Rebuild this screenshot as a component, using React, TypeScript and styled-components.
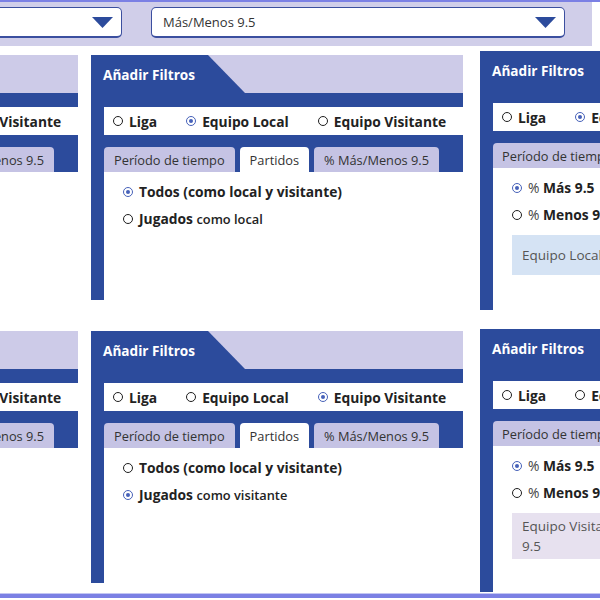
import React from 'react';
import styled, { createGlobalStyle } from 'styled-components';

const BLUE = '#2c4b9c';
const HEAD_LAV = '#cdcbe8';
const TAB_LAV = '#c5c3e4';

const GlobalStyle = createGlobalStyle`
  html, body { margin: 0; padding: 0; background: #fff; }
  body { font-family: 'Open Sans', 'Liberation Sans', sans-serif; color: #222; }
`;

const Frame = styled.div`
  width: 600px;
  height: 600px;
  box-sizing: border-box;
  overflow: hidden;
  border-top: 2px solid #7b80e4;
  display: flex;
  flex-direction: column;
`;

const TopBar = styled.header`
  width: 592px;
  height: 44px;
  flex-shrink: 0;
  box-sizing: border-box;
  padding-top: 5px;
  background: #d0cee9;
  display: flex;
  align-items: flex-start;
  gap: 29px;
`;

const Select = styled.div<{ $w: number; $pull?: number }>`
  width: ${p => p.$w}px;
  margin-left: ${p => p.$pull ?? 0}px;
  height: 31px;
  flex-shrink: 0;
  box-sizing: border-box;
  background: #fff;
  border: 1.5px solid #3b4f9f;
  border-bottom-width: 2.5px;
  border-radius: 5px;
  padding: 0 8px 0 11px;
  display: flex;
  align-items: center;
  justify-content: space-between;
  font-size: 13px;
  color: #333;
`;

const Canvas = styled.main`
  flex: 1;
  min-height: 0;
  display: flex;
  margin-left: -294px;
`;

const Column = styled.div<{ $top: number; $gap: number; $ml: number }>`
  flex-shrink: 0;
  display: flex;
  flex-direction: column;
  padding-top: ${p => p.$top}px;
  gap: ${p => p.$gap}px;
  margin-left: ${p => p.$ml}px;
`;

const Panel = styled.section<{ $h: number }>`
  width: 372px;
  height: ${p => p.$h}px;
  display: flex;
  flex-direction: column;
`;

const PanelHeader = styled.div`
  height: 38px;
  flex-shrink: 0;
  background: ${HEAD_LAV};
  display: flex;
`;

const HeaderTab = styled.div<{ $w: number }>`
  width: ${p => p.$w}px;
  box-sizing: border-box;
  padding-left: 12px;
  background: ${BLUE};
  clip-path: polygon(0 0, calc(100% - 37px) 0, 100% 100%, 0 100%);
  display: flex;
  align-items: center;
  color: #fff;
  font-size: 13.6px;
  font-weight: 700;
`;

const PanelBody = styled.div`
  flex: 1;
  background: ${BLUE};
  padding: 14px 0 0 13px;
  display: flex;
  flex-direction: column;
`;

const RadioBar = styled.div`
  height: 28px;
  flex-shrink: 0;
  background: #fff;
  padding-left: 9px;
  display: flex;
  align-items: center;
  gap: 29px;
  font-size: 14.4px;
  font-weight: 700;
  white-space: nowrap;
`;

const TabRow = styled.div`
  margin-top: 12px;
  height: 25px;
  flex-shrink: 0;
  display: flex;
  gap: 5px;
`;

const Tab = styled.div<{ $active?: boolean; $pad?: number }>`
  padding: 0 ${p => p.$pad ?? 10}px;
  border-radius: 4px 4px 0 0;
  background: ${p => (p.$active ? '#fff' : TAB_LAV)};
  display: flex;
  align-items: center;
  font-size: 12.8px;
  font-weight: 500;
  color: #333;
  white-space: nowrap;
`;

const Content = styled.div`
  flex: 1;
  background: #fff;
  padding: 11px 0 0 19px;
  display: flex;
  flex-direction: column;
  gap: 10px;
`;

const Option = styled.label`
  height: 17px;
  display: flex;
  align-items: center;
  gap: 6px;
  font-size: 13.8px;
  white-space: nowrap;
`;

const Dot = styled.span<{ $on?: boolean }>`
  width: 10px;
  height: 10px;
  flex-shrink: 0;
  box-sizing: border-box;
  border-radius: 50%;
  border: 1.7px solid ${p => (p.$on ? '#4661b9' : '#1e1e1e')};
  display: flex;
  align-items: center;
  justify-content: center;
  &::after {
    content: '';
    width: 4px;
    height: 4px;
    border-radius: 50%;
    background: ${p => (p.$on ? '#4661b9' : 'transparent')};
  }
`;

const Bold = styled.span`
  font-weight: 700;
`;

const Soft = styled.span`
  font-weight: 600;
  font-size: 12.8px;
`;

const Plain = styled.span`
  font-weight: 400;
  color: #444;
`;

const Note = styled.div<{ $tone: 'blue' | 'lilac' }>`
  width: 320px;
  margin-top: 2px;
  min-height: 40px;
  box-sizing: border-box;
  padding: 3px 10px;
  display: flex;
  align-items: center;
  background: ${p => (p.$tone === 'blue' ? '#d5e3f4' : '#e7e1ef')};
  color: #555;
  font-size: 13.5px;
  line-height: 20px;
  white-space: nowrap;
`;

const BottomRule = styled.div`
  height: 5px;
  flex-shrink: 0;
  margin-bottom: 2px;
  box-sizing: border-box;
  border-top: 1px solid #c3c6f2;
  background: #7b80e4;
`;

const Caret = () => (
  <svg width="21" height="11" viewBox="0 0 21 11">
    <polygon points="0,0 21,0 10.5,11" fill="#2c4b9c" />
  </svg>
);

type Team = 'liga' | 'local' | 'visit';
type TabKey = 'periodo' | 'partidos' | 'pct';

const RadioGroup = ({ team }: { team: Team }) => (
  <RadioBar>
    <Option as="span"><Dot $on={team === 'liga'} /><span>Liga</span></Option>
    <Option as="span"><Dot $on={team === 'local'} /><span>Equipo Local</span></Option>
    <Option as="span"><Dot $on={team === 'visit'} /><span>Equipo Visitante</span></Option>
  </RadioBar>
);

const Tabs = ({ active, pad }: { active: TabKey; pad?: number }) => (
  <TabRow>
    <Tab $active={active === 'periodo'} $pad={pad}>Período de tiempo</Tab>
    <Tab $active={active === 'partidos'} $pad={pad}>Partidos</Tab>
    <Tab $active={active === 'pct'} $pad={pad}>% Más/Menos 9.5</Tab>
  </TabRow>
);

const FilterPanel = ({
  h, team, tab, wideHead, tabPad, children,
}: {
  h: number; team: Team; tab: TabKey; wideHead?: boolean; tabPad?: number; children?: React.ReactNode;
}) => (
  <Panel $h={h}>
    <PanelHeader>
      <HeaderTab $w={wideHead ? 230 : 154}>Añadir Filtros</HeaderTab>
    </PanelHeader>
    <PanelBody>
      <RadioGroup team={team} />
      <Tabs active={tab} pad={tabPad} />
      <Content>{children}</Content>
    </PanelBody>
  </Panel>
);

export default function App() {
  return (
    <>
      <GlobalStyle />
      <Frame>
        <TopBar>
          <Select $w={300} $pull={-178}>
            <span>Equipo</span>
            <Caret />
          </Select>
          <Select $w={414}>
            <span>Más/Menos 9.5</span>
            <Caret />
          </Select>
        </TopBar>
        <Canvas>
          <Column $top={9} $gap={31} $ml={0}>
            <FilterPanel h={245} team="visit" tab="periodo" />
            <FilterPanel h={252} team="visit" tab="periodo" />
          </Column>
          <Column $top={9} $gap={31} $ml={13}>
            <FilterPanel h={245} team="local" tab="partidos">
              <Option><Dot $on /><Bold>Todos (como local y visitante)</Bold></Option>
              <Option><Dot /><span><Bold>Jugados</Bold> <Soft>como local</Soft></span></Option>
            </FilterPanel>
            <FilterPanel h={252} team="visit" tab="partidos">
              <Option><Dot /><Bold>Todos (como local y visitante)</Bold></Option>
              <Option><Dot $on /><span><Bold>Jugados</Bold> <Soft>como visitante</Soft></span></Option>
            </FilterPanel>
          </Column>
          <Column $top={5} $gap={19} $ml={17}>
            <FilterPanel h={259} team="local" tab="pct" wideHead tabPad={9}>
              <Option><Dot $on /><span><Plain>%</Plain> <Bold>Más 9.5</Bold></span></Option>
              <Option><Dot /><span><Plain>%</Plain> <Bold>Menos 9.5</Bold></span></Option>
              <Note $tone="blue">Equipo Local: 7 de 10 partidos Más 9.5</Note>
            </FilterPanel>
            <FilterPanel h={263} team="visit" tab="pct" wideHead tabPad={9}>
              <Option><Dot $on /><span><Plain>%</Plain> <Bold>Más 9.5</Bold></span></Option>
              <Option><Dot /><span><Plain>%</Plain> <Bold>Menos 9.5</Bold></span></Option>
              <Note $tone="lilac">
                <span>Equipo Visitante: 6 de 10 partidos Más<br />9.5</span>
              </Note>
            </FilterPanel>
          </Column>
        </Canvas>
        <BottomRule />
      </Frame>
    </>
  );
}
